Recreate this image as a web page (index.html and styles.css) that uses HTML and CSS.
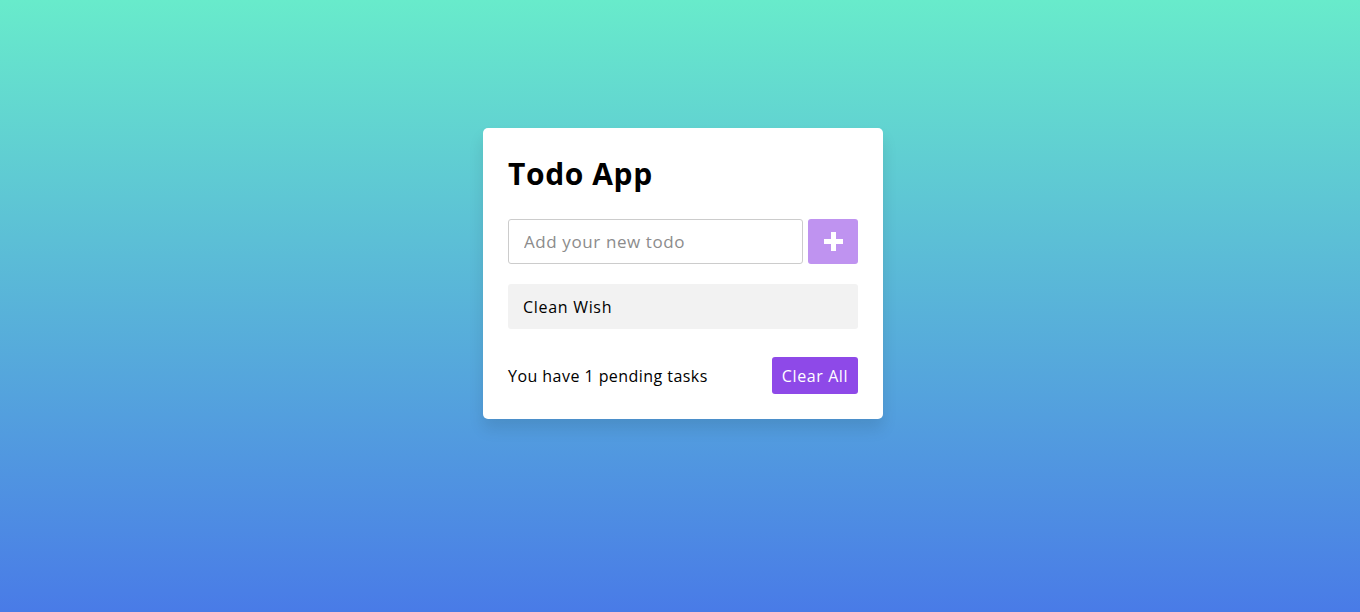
FILE: index.html
```html
<!DOCTYPE html>
<html lang="en">
<head>
<meta charset="utf-8">
<title>Todo App</title>
<link rel="stylesheet" href="styles.css">
</head>
<body>
<div class="wrapper">
  <h1 class="title">Todo App</h1>
  <div class="input-row">
    <input class="todo-input" type="text" placeholder="Add your new todo">
    <button class="add-btn" aria-label="Add">
      <svg width="19" height="19" viewBox="0 0 19 19"><rect x="7" y="0" width="5" height="19" fill="#fff"/><rect x="0" y="7" width="19" height="5" fill="#fff"/></svg>
    </button>
  </div>
  <ul class="todo-list">
    <li class="todo-item">Clean Wish</li>
  </ul>
  <div class="footer">
    <span class="pending">You have 1 pending tasks</span>
    <button class="clear-btn">Clear All</button>
  </div>
</div>
</body>
</html>
```
FILE: styles.css
```css
* { box-sizing: border-box; }
html, body { height: 100%; }
body {
  margin: 0;
  padding: 128px 0 0 6px;
  background: linear-gradient(to bottom, #68ebcb, #497be7);
  font-family: "Open Sans", "Liberation Sans", sans-serif;
  display: flex;
  justify-content: center;
  align-items: flex-start;
}
.wrapper {
  width: 400px;
  background: #fff;
  border-radius: 5px;
  padding: 25px;
  box-shadow: 0 10px 15px rgba(0, 0, 0, 0.1);
}
.title {
  margin: 0 0 24px;
  font-size: 30px;
  line-height: 42px;
  font-weight: 700;
  color: #000;
  letter-spacing: 0.6px;
}
.input-row {
  display: flex;
  gap: 5px;
  height: 45px;
}
.todo-input {
  flex: 1;
  height: 45px;
  border: 1px solid #ccc;
  border-radius: 3px;
  padding: 0 15px;
  font-family: inherit;
  font-size: 17px;
  letter-spacing: 0.6px;
  color: #000;
  outline: none;
}
.todo-input::placeholder { color: #8c8c8c; }
.add-btn {
  width: 50px;
  height: 45px;
  border: none;
  border-radius: 3px;
  background: #bf93f0;
  display: flex;
  align-items: center;
  justify-content: center;
  padding: 0;
}
.todo-list {
  list-style: none;
  margin: 20px 0 0;
  padding: 0;
}
.todo-item {
  height: 45px;
  background: #f2f2f2;
  border-radius: 3px;
  padding: 0 15px;
  display: flex;
  align-items: center;
  font-size: 16px;
  letter-spacing: 0.7px;
  color: #000;
}
.footer {
  margin-top: 28px;
  display: flex;
  align-items: center;
  justify-content: space-between;
}
.pending {
  font-size: 16px;
  letter-spacing: 0.45px;
  color: #000;
}
.clear-btn {
  height: 37px;
  width: 86px;
  border: none;
  border-radius: 3px;
  background: #8e49e8;
  color: #fff;
  font-family: inherit;
  font-size: 16px;
  letter-spacing: 0.6px;
  padding: 0;
}
```
